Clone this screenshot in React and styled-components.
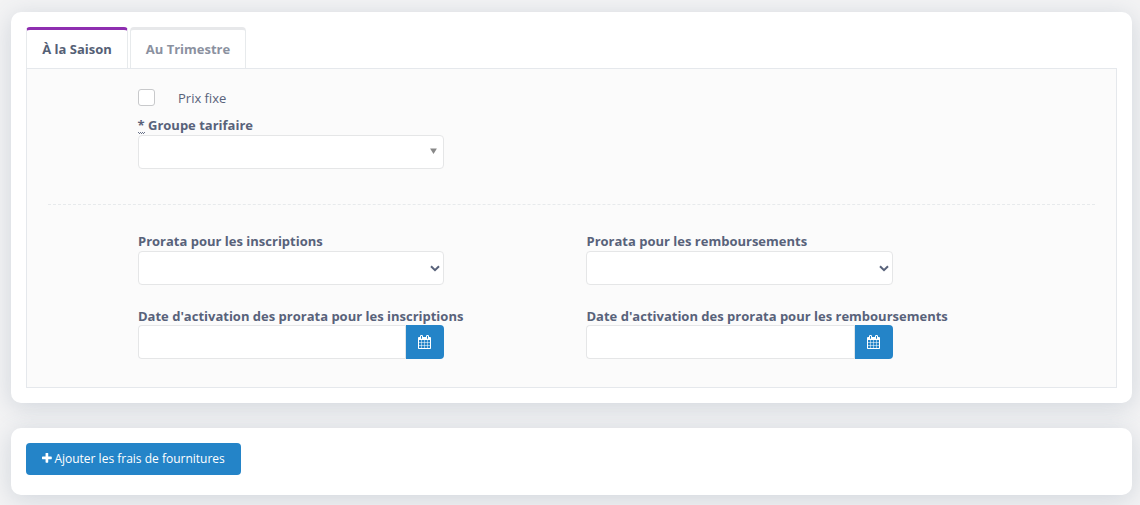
import React from "react";
import styled, { createGlobalStyle } from "styled-components";

const GlobalStyle = createGlobalStyle`
  *, *::before, *::after { box-sizing: border-box; }
  body {
    margin: 0;
    background: #f3f3f4;
    color: #58627a;
    font: 400 13px/18px "Open Sans", "Noto Sans", sans-serif;
    overflow: hidden;
  }
`;

const Page = styled.main`
  display: flex;
  flex-direction: column;
  gap: 25px;
  padding: 12px 8px 10px 11px;
`;

const Card = styled.section`
  height: ${(p) => p.$height}px;
  padding: 15px;
  background: #fff;
  border-radius: 10px;
  box-shadow: 0 4px 24px rgba(69, 95, 125, 0.2);
`;

const TabList = styled.div`
  display: flex;
  gap: 2px;
  height: 41px;
`;

const Tab = styled.button`
  width: ${(p) => p.$width}px;
  padding: 0 0 1px;
  border: 1px solid #e7eaec;
  border-top: 3px solid ${(p) => (p.$active ? "#8e2eb0" : "#e7e8ea")};
  border-bottom: 0;
  border-radius: 4px 4px 0 0;
  background: #fff;
  color: ${(p) => (p.$active ? "#556075" : "#8b91a0")};
  font: inherit;
  font-weight: 700;
`;

const Panel = styled.div`
  height: 320px;
  padding: 20px 21px 0;
  border: 1px solid #e5e8ec;
  background: #fbfbfb;
`;

const Pricing = styled.div`
  padding-left: 90px;
`;

const CheckRow = styled.label`
  display: flex;
  align-items: center;
  gap: 23px;
  height: 17px;
  margin-bottom: 10px;
`;

const Checkbox = styled.input`
  appearance: none;
  width: 17px;
  height: 17px;
  margin: 0;
  border: 1px solid #c8c9cb;
  border-radius: 3px;
  background: #fff;
`;

const CheckText = styled.span`
  line-height: 17px;
  padding-top: 2px;
`;

const Field = styled.div`
  width: 306px;
`;

const Label = styled.label`
  display: block;
  height: ${(p) => p.$height || 19}px;
  padding-left: ${(p) => p.$indent || 0}px;
  font-weight: 700;
  line-height: 19px;
  white-space: nowrap;
`;

const Required = styled.abbr`
  display: inline-block;
  height: 18px;
  margin-left: -0.5px;
  padding-bottom: 1px;
  text-decoration: none;
  line-height: 19px;
  vertical-align: top;
  background:
    repeating-linear-gradient(90deg, #6b748a 0 1px, transparent 1px 2px) 0 16px / 100% 1px no-repeat,
    repeating-linear-gradient(90deg, transparent 0 1px, #6b748a 1px 2px) 0 17px / 100% 1px no-repeat;
`;

const Control = styled.div`
  display: flex;
  align-items: center;
  justify-content: flex-end;
  height: 34px;
  padding-right: ${(p) => p.$inset || 4}px;
  border: 1px solid #e5e6e7;
  border-radius: 4px;
  background: #fff;
`;

const Chevron = () => (
  <Glyph width="10" height="7" viewBox="0 0 10 7">
    <path d="M1 1.2 5 5.2 9 1.2" fill="none" stroke="#58627a" strokeWidth="2" />
  </Glyph>
);

const Triangle = () => (
  <Glyph width="7" height="8" viewBox="0 0 7 8">
    <path d="M0.1 0.5H6.9L3.5 6Z" fill="#888" />
  </Glyph>
);

const Divider = styled.hr`
  height: 1px;
  margin: 35px 0 27px;
  border: 0;
  border-top: 1px dashed #e7eaec;
`;

const FieldGrid = styled.div`
  display: grid;
  grid-template-columns: 306px 307px;
  column-gap: 142px;
  row-gap: 22px;
  padding-left: 90px;

  ${Field} { width: auto; }
`;

const DateGroup = styled.div`
  display: flex;
  height: 34px;
`;

const DateInput = styled.input`
  flex: 1;
  min-width: 0;
  border: 1px solid #e5e6e7;
  border-right-color: #dfe5e9;
  border-radius: 4px 0 0 4px;
  background: #fff;
`;

const DateButton = styled.button`
  display: flex;
  align-items: center;
  justify-content: center;
  width: 38px;
  padding: 0 1px 0 0;
  border: 0;
  border-radius: 0 4px 4px 0;
  background: #2484c8;
  color: #fff;
`;

const AddButton = styled.button`
  display: flex;
  align-items: center;
  gap: 2.6px;
  width: 215px;
  height: 32px;
  padding: 0 0 1px 16px;
  border: 0;
  border-radius: 4px;
  background: #2484c8;
  color: #fff;
  font: 400 12px/18px "Open Sans", "Noto Sans", sans-serif;
  white-space: nowrap;
`;

const Glyph = styled.svg`
  display: block;
  flex: none;
  fill: currentColor;
`;

const CalendarIcon = () => (
  <Glyph width="13" height="14" viewBox="0 0 1664 1792">
    <path d="M128 1664h288v-288h-288v288zm352 0h320v-288h-320v288zm-352-352h288v-320h-288v320zm352 0h320v-320h-320v320zm-352-384h288v-288h-288v288zm736 736h320v-288h-320v288zm-384-736h320v-288h-320v288zm768 736h288v-288h-288v288zm-384-352h320v-320h-320v320zm-352-864v-288q0-13-9.5-22.5t-22.5-9.5h-64q-13 0-22.5 9.5t-9.5 22.5v288q0 13 9.5 22.5t22.5 9.5h64q13 0 22.5-9.5t9.5-22.5zm736 864h288v-320h-288v320zm-384-384h320v-288h-320v288zm384 0h288v-288h-288v288zm32-480v-288q0-13-9.5-22.5t-22.5-9.5h-64q-13 0-22.5 9.5t-9.5 22.5v288q0 13 9.5 22.5t22.5 9.5h64q13 0 22.5-9.5t9.5-22.5zm384-64v1280q0 52-38 90t-90 38h-1408q-52 0-90-38t-38-90v-1280q0-52 38-90t90-38h128v-96q0-66 47-113t113-47h64q66 0 113 47t47 113v96h384v-96q0-66 47-113t113-47h64q66 0 113 47t47 113v96h128q52 0 90 38t38 90z" />
  </Glyph>
);

const PlusIcon = () => (
  <Glyph width="9.8" height="12.5" viewBox="0 0 1408 1792">
    <path d="M1408 736v192q0 40-28 68t-68 28h-416v416q0 40-28 68t-68 28h-192q-40 0-68-28t-28-68v-416h-416q-40 0-68-28t-28-68v-192q0-40 28-68t68-28h416v-416q0-40 28-68t68-28h192q40 0 68 28t28 68v416h416q40 0 68 28t28 68z" />
  </Glyph>
);

const SelectField = ({ label, indent }) => (
  <Field>
    <Label $indent={indent}>{label}</Label>
    <Control $inset={3}>
      <Chevron />
    </Control>
  </Field>
);

const DateField = ({ label, indent }) => (
  <Field>
    <Label $height={18} $indent={indent}>{label}</Label>
    <DateGroup>
      <DateInput />
      <DateButton>
        <CalendarIcon />
      </DateButton>
    </DateGroup>
  </Field>
);

export default function App() {
  return (
    <>
      <GlobalStyle />
      <Page>
        <Card $height={391}>
          <TabList>
            <Tab $active $width={102}>À la Saison</Tab>
            <Tab $width={116}>Au Trimestre</Tab>
          </TabList>
          <Panel>
            <Pricing>
              <CheckRow>
                <Checkbox type="checkbox" />
                <CheckText>Prix fixe</CheckText>
              </CheckRow>
              <Field>
                <Label>
                  <Required>*</Required> Groupe tarifaire
                </Label>
                <Control $inset={6}>
                  <Triangle />
                </Control>
              </Field>
            </Pricing>
            <Divider />
            <FieldGrid>
              <SelectField label="Prorata pour les inscriptions" />
              <SelectField label="Prorata pour les remboursements" indent={0.5} />
              <DateField label="Date d'activation des prorata pour les inscriptions" />
              <DateField label="Date d'activation des prorata pour les remboursements" indent={0.5} />
            </FieldGrid>
          </Panel>
        </Card>
        <Card $height={67}>
          <AddButton>
            <PlusIcon />
            Ajouter les frais de fournitures
          </AddButton>
        </Card>
      </Page>
    </>
  );
}
